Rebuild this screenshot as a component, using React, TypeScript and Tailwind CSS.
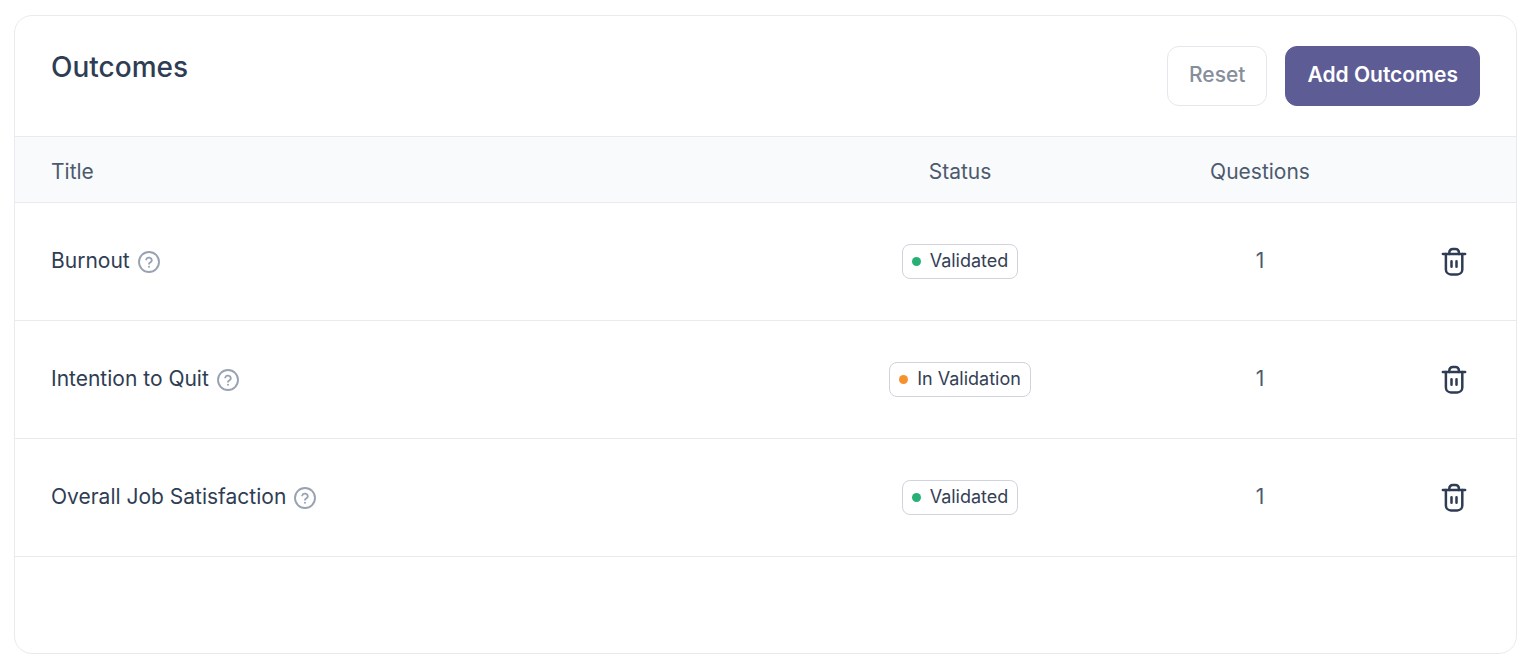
type Status = "validated" | "inValidation";

type Outcome = {
  title: string;
  status: Status;
  questions: number;
};

const OUTCOMES: Outcome[] = [
  { title: "Burnout", status: "validated", questions: 1 },
  { title: "Intention to Quit", status: "inValidation", questions: 1 },
  { title: "Overall Job Satisfaction", status: "validated", questions: 1 },
];

const STATUS = {
  validated: { label: "Validated", dot: "bg-[#27b074]" },
  inValidation: { label: "In Validation", dot: "bg-[#f6922e]" },
};

function HelpIcon() {
  return (
    <svg width="22" height="22" viewBox="0 0 22 22" fill="none" stroke="currentColor" strokeLinecap="round" strokeLinejoin="round" aria-hidden>
      <circle cx="11" cy="11" r="10" strokeWidth="1.9" />
      <path d="M8.2 8.5a2.9 2.9 0 0 1 5.6.9c0 1.9-2.8 2.1-2.8 3.4" strokeWidth="1.8" />
      <circle cx="11" cy="15.8" r="1" fill="currentColor" stroke="none" />
    </svg>
  );
}

function TrashIcon() {
  return (
    <svg width="28" height="30" viewBox="0 0 28 30" fill="none" stroke="currentColor" strokeWidth="2.5" strokeLinecap="round" aria-hidden>
      <path d="M2.9 6.9h22.2" />
      <path d="M5.9 7v15.4a5 5 0 0 0 5 5h6.4a5 5 0 0 0 5-5V7" />
      <path d="M9.3 7V5.4a3.4 3.4 0 0 1 3.4-3.4h2.8a3.4 3.4 0 0 1 3.4 3.4V7" />
      <path d="M11.5 14.2v5.6M16.5 14.2v5.6" />
    </svg>
  );
}

function StatusBadge({ status }: { status: Status }) {
  const { label, dot } = STATUS[status];
  return (
    <span className="inline-flex h-[35px] items-center gap-[9px] rounded-lg border border-[#d0d3dc] px-[9px] align-middle text-[18px] leading-6 text-[#344054]">
      <span className={`h-[9px] w-[9px] rounded-full ${dot}`} />
      <span className="pb-0.5">{label}</span>
    </span>
  );
}

export default function App() {
  return (
    <main className="bg-white pt-[15px] pr-1.5 pb-[11px] pl-3.5 font-['Inter',sans-serif]">
      <section className="overflow-hidden rounded-[18px] border border-[#e9eaee] pb-24">
        <header className="flex items-start justify-between px-9 py-[30px]">
          <h1 className="text-[28px] leading-[42px] font-medium text-[#2f3d54]">Outcomes</h1>
          <div className="flex gap-[18px]">
            <button type="button" className="h-[60px] rounded-xl border border-[#e6e7ec] px-[21px] pb-0.5 text-[21px] leading-7 font-medium text-[#868e9b]">
              Reset
            </button>
            <button type="button" className="h-[60px] rounded-xl border border-[#5d5c95] bg-[#5d5c95] px-[21px] pb-0.5 text-[21px] leading-7 font-semibold text-white">
              Add Outcomes
            </button>
          </div>
        </header>

        <table className="w-full table-fixed border-separate border-spacing-0 text-[21px] leading-7">
          <thead className="bg-[#f9fafc] text-[#4d5a6e]">
            <tr className="h-[67px]">
              <th scope="col" className="border-y border-[#e9eaee] px-9 pt-1 text-left font-normal">Title</th>
              <th scope="col" className="w-[300px] border-y border-[#e9eaee] pt-1 text-center font-normal">Status</th>
              <th scope="col" className="w-[300px] border-y border-[#e9eaee] pt-1 text-center font-normal">Questions</th>
              <th scope="col" aria-label="Actions" className="w-[106px] border-y border-[#e9eaee]" />
            </tr>
          </thead>
          <tbody>
            {OUTCOMES.map((o) => (
              <tr key={o.title} className="h-[118px]">
                <td className="border-b border-[#e9eaee] px-9 text-[#2f3d54]">
                  <div className="flex items-center gap-2">
                    <span className="pb-0.5">{o.title}</span>
                    <button type="button" aria-label={`About ${o.title}`} className="text-[#98a2b3]">
                      <HelpIcon />
                    </button>
                  </div>
                </td>
                <td className="border-b border-[#e9eaee] text-center">
                  <StatusBadge status={o.status} />
                </td>
                <td className="border-b border-[#e9eaee] pb-0.5 text-center text-[#4d5a6e]">{o.questions}</td>
                <td className="border-b border-[#e9eaee] pr-12">
                  <button type="button" aria-label={`Delete ${o.title}`} className="ml-auto block text-[#2f3d54]">
                    <TrashIcon />
                  </button>
                </td>
              </tr>
            ))}
          </tbody>
        </table>
      </section>
    </main>
  );
}
